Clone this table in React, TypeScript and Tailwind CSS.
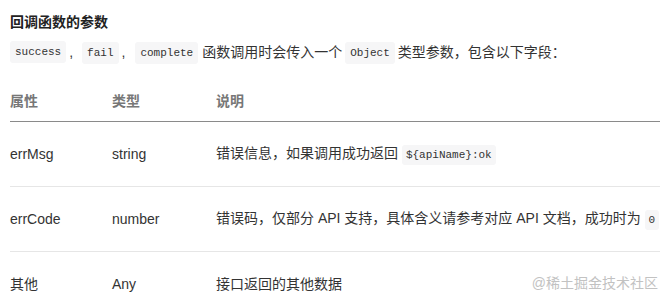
const sans = "font-['Liberation_Sans','Noto_Sans_CJK_SC',sans-serif]";

function Code({ children, small }: { children: React.ReactNode; small?: boolean }) {
  return (
    <code
      className={`inline-block rounded-[3px] bg-[#f6f6f7] font-['Liberation_Mono',monospace] text-[11px] text-[#333] ${
        small ? 'h-[20px] leading-[20px] px-[4px]' : 'h-[22px] leading-[22px] px-[5px]'
      }`}
    >
      {children}
    </code>
  );
}

const rows = [
  {
    name: 'errMsg',
    type: 'string',
    desc: (
      <>
        错误信息，如果调用成功返回 <Code small>{'${apiName}:ok'}</Code>
      </>
    ),
  },
  {
    name: 'errCode',
    type: 'number',
    desc: (
      <>
        错误码，仅部分 API 支持，具体含义请参考对应 API 文档，成功时为 <Code small>0</Code>
      </>
    ),
  },
  { name: '其他', type: 'Any', desc: <>接口返回的其他数据</> },
];

export default function App() {
  return (
    <div className={`relative w-[660px] h-[301px] overflow-hidden bg-white pl-[10px] text-[#333] ${sans}`}>
      {/* Heading */}
      <h3 className="mt-[13px] text-[14px] leading-[18px] font-bold text-[#222]">回调函数的参数</h3>

      {/* Intro line */}
      <p className="mt-[9px] flex items-center whitespace-nowrap text-[14px] leading-[22px]">
        <Code>success</Code>
        <span className="ml-[3px]">,</span>
        <span className="ml-[9px]"><Code>fail</Code></span>
        <span className="ml-[3px]">,</span>
        <span className="ml-[10px]"><Code>complete</Code></span>
        <span className="ml-[4px]">函数调用时会传入一个</span>
        <span className="ml-[3px]"><Code>Object</Code></span>
        <span className="ml-[3px]">类型参数，包含以下字段：</span>
      </p>

      {/* Table */}
      <div className="mt-[18px] w-[650px] text-[14px]">
        <div className="flex h-[40px] items-center border-b border-[#8a8a8a] font-semibold text-[#777]">
          <div className="w-[102px]">属性</div>
          <div className="w-[104px]">类型</div>
          <div className="flex-1">说明</div>
        </div>
        {rows.map((r) => (
          <div key={r.name} className="flex h-[65px] items-center border-b border-[#e6e6e6] whitespace-nowrap">
            <div className="w-[102px] shrink-0">{r.name}</div>
            <div className="w-[104px] shrink-0">{r.type}</div>
            <div className="flex-1">{r.desc}</div>
          </div>
        ))}
      </div>

      {/* Watermark */}
      <div className="absolute right-[2px] top-[273px] text-[14px] leading-[20px] text-[#c2c2c2]">@稀土掘金技术社区</div>
    </div>
  );
}
